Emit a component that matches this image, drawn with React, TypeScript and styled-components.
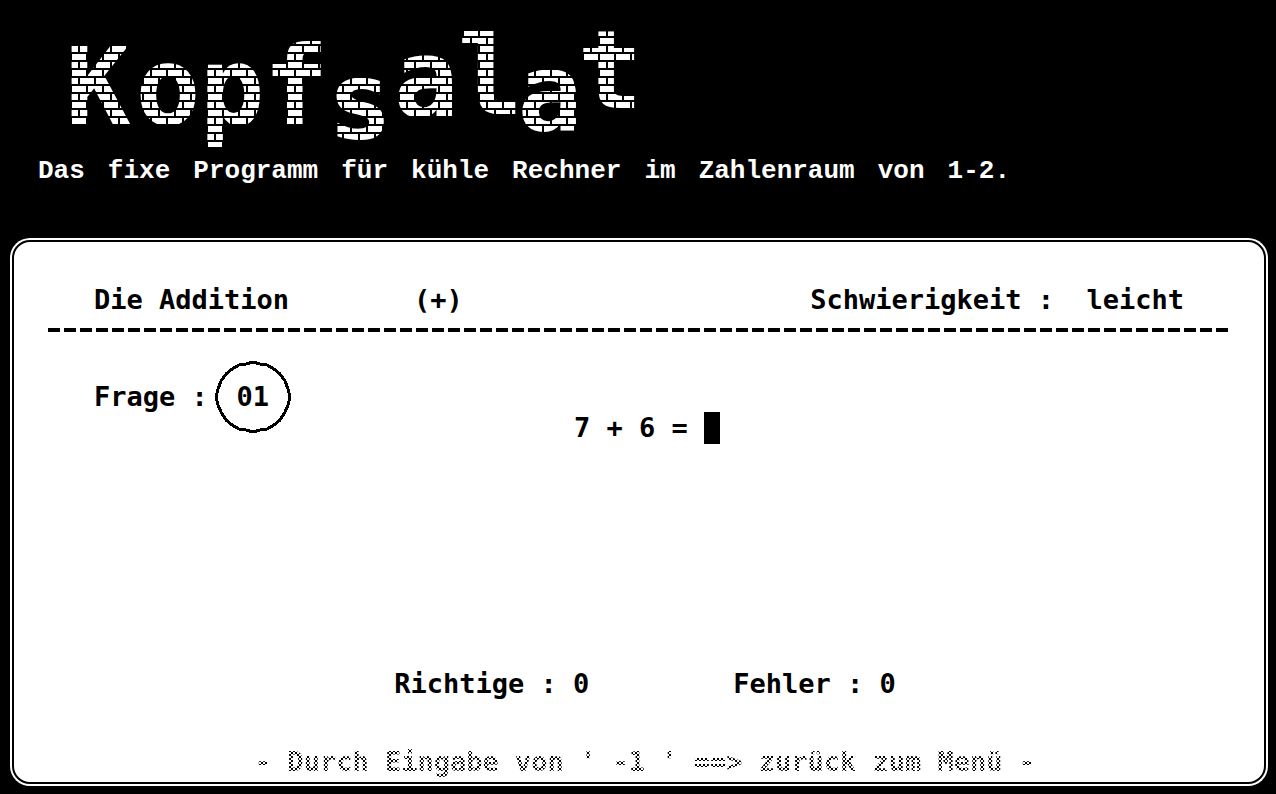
import React from "react";
import styled, { createGlobalStyle } from "styled-components";

const GlobalStyle = createGlobalStyle`
  * { box-sizing: border-box; }
  body { margin: 0; background: #000; }
`;

const Page = styled.div`
  min-height: 100vh;
  display: flex;
  flex-direction: column;
  background: #000;
  color: #000;
  font: bold 27px/32px "DejaVu Sans Mono", monospace;
`;

const Header = styled.header`
  padding-bottom: 51px;
  color: #fff;
`;

const Title = styled.h1`
  position: relative;
  display: grid;
  grid-template-columns: 76px repeat(4, 64px) 68px repeat(3, 60px);
  justify-items: center;
  align-items: start;
  margin: 0;
  padding-left: 60px;
  font-size: 108px;
  line-height: 108px;
`;

const Letter = styled.span<{ $drop: number }>`
  margin-top: ${(p) => p.$drop}px;
`;

const Mortar = styled.svg`
  position: absolute;
  inset: 0;
  width: 100%;
  height: 100%;
`;

const Tagline = styled.p`
  max-width: 1010px;
  margin: 0;
  padding-left: 38px;
  font-family: "Liberation Mono", monospace;
  font-size: 26px;
  text-align: justify;
  text-align-last: justify;
`;

const Frame = styled.main`
  flex: 1;
  display: flex;
  margin: 0 8px 8px 10px;
  padding: 2px;
  border-radius: 20px;
  background: #fff;
`;

const Panel = styled.div`
  flex: 1;
  display: flex;
  flex-direction: column;
  border: 2px solid #000;
  border-radius: 18px;
  white-space: pre;
`;

const TopicRow = styled.div`
  display: grid;
  grid-template-columns: 320px 1fr auto;
  padding: 42px 80px 0;
`;

const Topic = styled.h2`
  margin: 0;
  font: inherit;
`;

const Rule = styled.hr`
  height: 4px;
  margin: 12px 36px 28px 34px;
  border: 0;
  background: repeating-linear-gradient(90deg, #000 0 12px, #fff 12px 16px);
`;

const QuestionRow = styled.div`
  display: grid;
  grid-template-columns: 480px 1fr;
  align-items: start;
  padding: 0 80px;
`;

const QuestionNumber = styled.div`
  display: flex;
  align-items: center;
  gap: 6px;
`;

const Badge = styled.span`
  position: relative;
  display: flex;
  align-items: center;
  justify-content: center;
  width: 78px;
  height: 74px;
`;

const Ring = styled.svg`
  position: absolute;
  inset: 0;
`;

const Equation = styled.form`
  display: flex;
  padding-top: 52px;
`;

const Answer = styled.input`
  width: 16px;
  height: 32px;
  padding: 0;
  border: 0;
  outline: 0;
  border-radius: 0;
  background: #000;
  color: #fff;
  font: inherit;
`;

const ScoreRow = styled.div`
  display: flex;
  justify-content: center;
  gap: 144px;
  margin-top: auto;
  padding-left: 12px;
`;

const Hint = styled.p`
  align-self: center;
  margin: 46px 0 4px 12px;
  color: transparent;
  background: repeating-conic-gradient(#000 0 25%, #fff 0 50%) 0 0 / 4px 4px;
  background-clip: text;
  -webkit-background-clip: text;
`;

const letters = [
  { char: "K", drop: 33 },
  { char: "o", drop: 33 },
  { char: "p", drop: 33 },
  { char: "f", drop: 33 },
  { char: "s", drop: 47 },
  { char: "a", drop: 25 },
  { char: "l", drop: 23 },
  { char: "a", drop: 39 },
  { char: "t", drop: 17 },
];

const scores = [
  { label: "Richtige", value: 0 },
  { label: "Fehler", value: 0 },
];

export default function App() {
  return (
    <Page>
      <GlobalStyle />
      <Header>
        <Title>
          {letters.map((l, i) => (
            <Letter key={i} $drop={l.drop}>{l.char}</Letter>
          ))}
          <Mortar aria-hidden="true" shapeRendering="crispEdges">
            <pattern id="mortar" width="16" height="16" patternUnits="userSpaceOnUse">
              <path d="M0 4h16v2H0zM0 12h16v2H0zM6 6h2v6H6zM14 0h2v4h-2zM14 14h2v2h-2z" fill="#000" />
            </pattern>
            <rect width="100%" height="100%" fill="url(#mortar)" />
          </Mortar>
        </Title>
        <Tagline>Das fixe Programm für kühle Rechner im Zahlenraum von 1-2.</Tagline>
      </Header>
      <Frame>
        <Panel>
          <TopicRow>
            <Topic>Die Addition</Topic>
            <span>(+)</span>
            <span>{"Schwierigkeit :  leicht"}</span>
          </TopicRow>
          <Rule />
          <QuestionRow>
            <QuestionNumber>
              <span>Frage :</span>
              <Badge>
                <Ring width="78" height="74" viewBox="0 0 78 74" shapeRendering="crispEdges" aria-hidden="true">
                  <path
                    d="M39 2L32 4L25 5L18 9L12 14L7 21L4 29L2 37L4 45L7 52L12 60L18 65L25 69L32 70L39 72L46 70L53 69L60 65L66 60L71 52L74 45L76 37L74 29L71 21L66 14L60 9L53 5L46 4Z"
                    fill="none"
                    stroke="#000"
                    strokeWidth="3"
                  />
                </Ring>
                01
              </Badge>
            </QuestionNumber>
            <Equation onSubmit={(e) => e.preventDefault()}>
              <label htmlFor="answer">{"7 + 6 = "}</label>
              <Answer id="answer" type="text" inputMode="numeric" autoComplete="off" />
            </Equation>
          </QuestionRow>
          <ScoreRow>
            {scores.map((s) => (
              <span key={s.label}>{`${s.label} : ${s.value}`}</span>
            ))}
          </ScoreRow>
          <Hint>{"- Durch Eingabe von ' -1 ' ==> zurück zum Menü -"}</Hint>
        </Panel>
      </Frame>
    </Page>
  );
}
